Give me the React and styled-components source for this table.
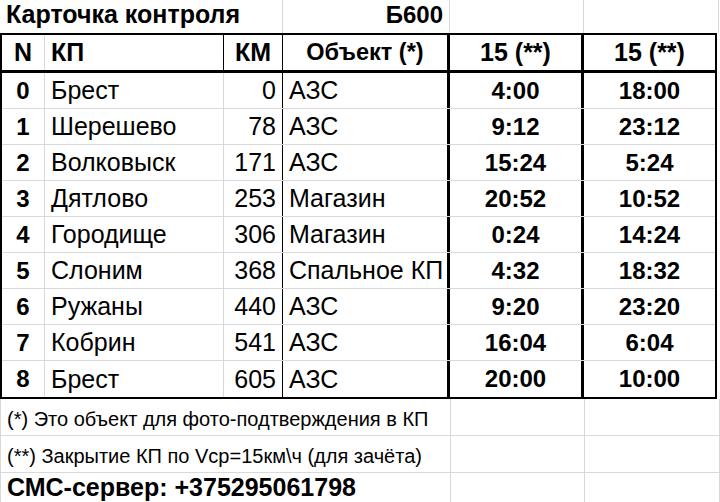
import React from 'react';
import styled, { createGlobalStyle } from 'styled-components';

const GlobalStyle = createGlobalStyle`
  body {
    margin: 0;
    background: #fff;
    font-family: "Liberation Sans", Arial, sans-serif;
    color: #000;
  }
`;

const GRID = '#d9d9d9';

const lines = {
  none: 'none',
  gray: `1px solid ${GRID}`,
  black: '1px solid #000',
  thick: '3px solid #000',
};

const Sheet = styled.div`
  width: 720px;
  height: 502px;
  overflow: hidden;
`;

const Row = styled.div`
  display: grid;
  grid-template-columns: ${(p) => p.$cols};
  height: ${(p) => p.$height}px;
  box-sizing: border-box;
  border-bottom: ${(p) => lines[p.$bottom || 'none']};
  border-left: ${(p) => lines[p.$left || 'none']};
`;

const Cell = styled.div`
  display: flex;
  align-items: ${(p) => p.$valign || 'center'};
  justify-content: ${(p) => p.$align || 'flex-start'};
  padding: 0 6px ${(p) => p.$pad || 0}px 6px;
  box-sizing: border-box;
  border-right: ${(p) => lines[p.$line || 'none']};
  font-size: ${(p) => p.$size || 25}px;
  font-weight: ${(p) => (p.$bold ? 700 : 400)};
  line-height: 1.15;
  white-space: nowrap;
  min-width: 0;
`;

const Table = styled.div`
  width: 717px;
  box-sizing: border-box;
  border: 2px solid #000;
`;

const TABLE_COLS = '43px 179px 59px 167px 134px 131px';

const headerLines = ['gray', 'black', 'black', 'thick', 'thick', 'none'];
const bodyLines = ['gray', 'gray', 'black', 'thick', 'thick', 'none'];

const rows = [
  [0, 'Брест', 0, 'АЗС', '4:00', '18:00'],
  [1, 'Шерешево', 78, 'АЗС', '9:12', '23:12'],
  [2, 'Волковыск', 171, 'АЗС', '15:24', '5:24'],
  [3, 'Дятлово', 253, 'Магазин', '20:52', '10:52'],
  [4, 'Городище', 306, 'Магазин', '0:24', '14:24'],
  [5, 'Слоним', 368, 'Спальное КП', '4:32', '18:32'],
  [6, 'Ружаны', 440, 'АЗС', '9:20', '23:20'],
  [7, 'Кобрин', 541, 'АЗС', '16:04', '6:04'],
  [8, 'Брест', 605, 'АЗС', '20:00', '10:00'],
];

const App = () => {
  return (
    <Sheet>
      <GlobalStyle />
      <Row $cols="283px 167px 134px 135px 1fr" $height={33}>
        <Cell $line="gray" $bold $valign="flex-end" $pad={4}>Карточка контроля</Cell>
        <Cell $line="gray" $bold $align="flex-end" $valign="flex-end" $pad={4} $size={24}>Б600</Cell>
        <Cell $line="gray" />
        <Cell $line="gray" />
        <Cell />
      </Row>

      <Table>
        <Row $cols={TABLE_COLS} $height={38} $bottom="thick">
          <Cell $line={headerLines[0]} $bold $align="center">N</Cell>
          <Cell $line={headerLines[1]} $bold>КП</Cell>
          <Cell $line={headerLines[2]} $bold $align="center">КМ</Cell>
          <Cell $line={headerLines[3]} $bold $align="center" $size={23.5}>Объект (*)</Cell>
          <Cell $line={headerLines[4]} $bold $align="center">15 (**)</Cell>
          <Cell $line={headerLines[5]} $bold $align="center">15 (**)</Cell>
        </Row>
        {rows.map((r, i) => (
          <Row
            key={r[0]}
            $cols={TABLE_COLS}
            $height={36}
            $bottom={i < rows.length - 1 ? 'gray' : 'none'}
          >
            <Cell $line={bodyLines[0]} $bold $align="center" $size={24}>{r[0]}</Cell>
            <Cell $line={bodyLines[1]}>{r[1]}</Cell>
            <Cell $line={bodyLines[2]} $align="flex-end">{r[2]}</Cell>
            <Cell $line={bodyLines[3]}>{r[3]}</Cell>
            <Cell $line={bodyLines[4]} $bold $align="center" $size={24}>{r[4]}</Cell>
            <Cell $line={bodyLines[5]} $bold $align="center" $size={24}>{r[5]}</Cell>
          </Row>
        ))}
      </Table>

      <Row $cols="450px 134px 135px 1fr" $height={37} $bottom="gray" $left="gray">
        <Cell $line="gray" $size={20} $valign="flex-end" $pad={4}>
          (*) Это объект для фото-подтверждения в КП
        </Cell>
        <Cell $line="gray" />
        <Cell $line="gray" />
        <Cell />
      </Row>
      <Row $cols="450px 134px 135px 1fr" $height={37} $bottom="gray" $left="gray">
        <Cell $line="gray" $size={20} $valign="flex-end" $pad={4}>
          {'(**) Закрытие КП по Vcp=15км\\ч (для зачёта)'}
        </Cell>
        <Cell $line="gray" />
        <Cell $line="gray" />
        <Cell />
      </Row>
      <Row $cols="450px 134px 135px 1fr" $height={40} $left="gray">
        <Cell $line="gray" $bold $valign="flex-start" $pad={0}>
          СМС-сервер: +375295061798
        </Cell>
        <Cell $line="gray" />
        <Cell $line="gray" />
        <Cell />
      </Row>
    </Sheet>
  );
};

export default App;
